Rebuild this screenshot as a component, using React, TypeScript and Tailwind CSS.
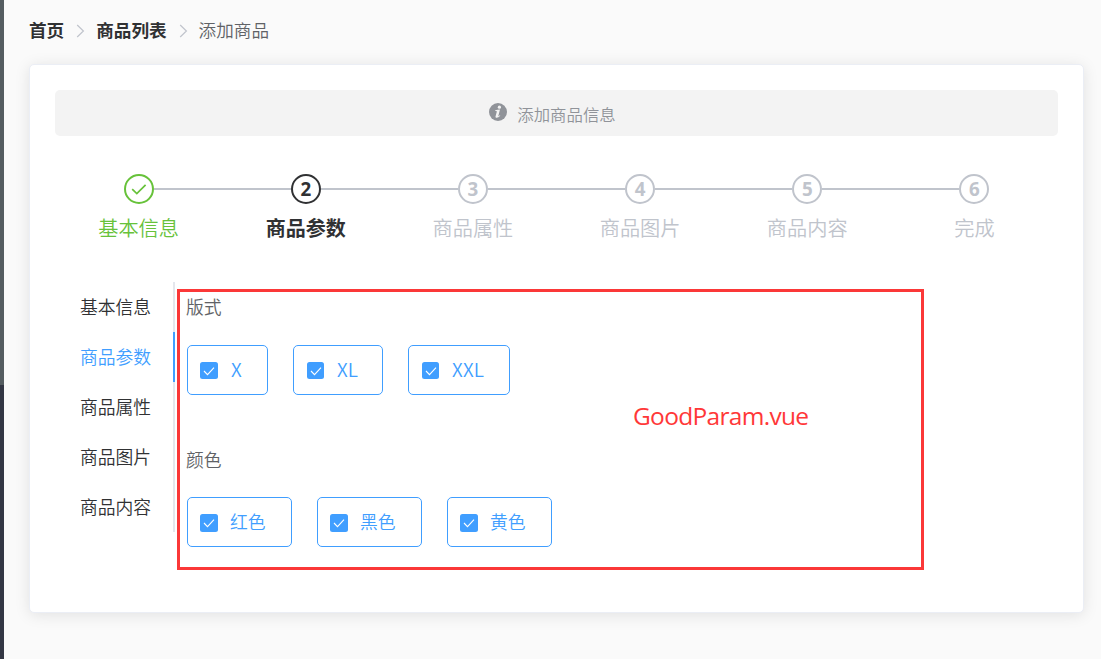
import React from "react";

const steps = ["基本信息", "商品参数", "商品属性", "商品图片", "商品内容", "完成"];
const tabs = ["基本信息", "商品参数", "商品属性", "商品图片", "商品内容"];

const params = [
  {
    name: "版式",
    nameClass: "h-[50px] leading-[48px]",
    options: [
      { label: "X", width: "w-[81px]", text: "ml-[13px] -mt-[3px] text-[19px]", box: "mt-[1px] h-[17px] w-[18px]" },
      { label: "XL", width: "w-[90px]", text: "ml-[13px] -mt-[3px] text-[19px]", box: "ml-[1px] mt-[1px] h-[17px] w-[17px]" },
      { label: "XXL", width: "w-[102px]", text: "ml-[13px] -mt-[3px] text-[19px] tracking-[0.2px]", box: "ml-[1px] mt-[1px] h-[17px] w-[17px]" },
    ],
  },
  {
    name: "颜色",
    nameClass: "h-[50px] leading-[50px]",
    options: [
      { label: "红色", width: "w-[105px]", text: "ml-[12px] -mt-[2px] text-[17.8px]", box: "mt-[2px] h-[18px] w-[18px]" },
      { label: "黑色", width: "w-[105px]", text: "ml-[12px] -mt-[2px] text-[17.8px]", box: "mt-[2px] h-[18px] w-[18px]" },
      { label: "黄色", width: "w-[105px]", text: "ml-[12px] -mt-[2px] text-[17.8px]", box: "mt-[2px] h-[18px] w-[18px]" },
    ],
  },
];

function Separator() {
  return (
    <svg className="mt-[1px] mr-[11px] ml-[12px] h-[14px] w-[9px]" viewBox="0 0 9 14" fill="none" stroke="#c0c4cc" strokeWidth="1.2">
      <path d="M1.2 1 7.4 7 1.2 13" />
    </svg>
  );
}

function Breadcrumb() {
  return (
    <nav className="flex h-[18px] items-center text-[17.6px] leading-[18px] text-[#606266]">
      <span className="font-bold text-[#303133]">首页</span>
      <Separator />
      <span className="font-bold text-[#303133]">商品列表</span>
      <Separator />
      <span className="font-[350]">添加商品</span>
    </nav>
  );
}

function InfoBanner() {
  return (
    <div className="flex h-[46px] items-center justify-center rounded-[5px] bg-[#f3f3f3] pr-[8px] text-[#909399]">
      <svg className="mr-[10px] mb-[2px] h-[18px] w-[18px]" viewBox="0 0 18 18">
        <circle cx="9" cy="9" r="9" fill="#909399" />
        <circle cx="10.4" cy="4.2" r="1.6" fill="#f3f3f3" />
        <path d="M6.2 7.3C7.8 6.8 9.4 6.6 11 6.6L9.3 12.9C9.2 13.7 9.8 13.3 10.8 12.2L11.3 12.6C9.4 15.1 6.2 15.6 6.5 13.5L7.8 8.8C7.9 8.1 7.3 8 6.2 8.1Z" fill="#f3f3f3" />
      </svg>
      <span className="pt-[1px] text-[16.4px] leading-5 font-[350]">添加商品信息</span>
    </div>
  );
}

function Steps() {
  return (
    <div className="mt-[38px] grid grid-cols-6">
      {steps.map((title, i) => {
        const tone =
          i === 0
            ? "border-[#67c23a] text-[#67c23a]"
            : i === 1
              ? "border-[#303133] text-[#303133]"
              : "border-[#c0c4cc] text-[#c0c4cc]";
        return (
          <div key={i} className={tone}>
            <div className="flex items-center">
              <div className={i === 0 ? "h-[2px] flex-1" : "h-[2px] flex-1 bg-[#c0c4cc]"} />
              <div className="flex h-[30px] w-[30px] items-center justify-center rounded-full border-2 border-inherit font-['Open_Sans','Noto_Sans',sans-serif] text-[18.75px] leading-none font-bold">
                {i === 0 ? (
                  <svg className="h-[16px] w-[18px]" viewBox="0 0 18 16" fill="none" stroke="currentColor" strokeWidth="1.7">
                    <path d="M2.2 8.2 6.8 12.6 15.6 3.8" />
                  </svg>
                ) : (
                  i + 1
                )}
              </div>
              <div className={i === steps.length - 1 ? "h-[2px] flex-1" : "h-[2px] flex-1 bg-[#c0c4cc]"} />
            </div>
            <div className={i === 1 ? "text-center text-[20px] leading-[48px] font-bold" : "text-center text-[20.2px] leading-[48px] font-[350]"}>
              {title}
            </div>
          </div>
        );
      })}
    </div>
  );
}

function SideTabs() {
  return (
    <div className="flex h-[250px] w-[120px] flex-col">
      {tabs.map((tab, i) => (
        <div
          key={i}
          className={
            i === 1
              ? "h-[50px] border-r-2 border-[#409eff] pl-[25px] text-[17.8px] leading-[49px] font-[350] text-[#409eff]"
              : "h-[50px] border-r-2 border-[#e4e7ed] pl-[25px] text-[17.8px] leading-[49px] font-[350] text-[#303133]"
          }
        >
          {tab}
        </div>
      ))}
    </div>
  );
}

type OptionProps = { label: string; width: string; text: string; box: string };

function Option({ label, width, text, box }: OptionProps) {
  return (
    <label className={`flex h-[50px] items-center rounded-[5px] border border-[#409eff] pl-[12px] text-[#409eff] ${width}`}>
      <span className={`flex items-center justify-center rounded-[2.5px] bg-[#409eff] ${box}`}>
        <svg className="h-[12px] w-[12px]" viewBox="0 0 12 12" fill="none" stroke="white" strokeWidth="1.1">
          <path d="M1 6 4.5 9.7 11 2.7" />
        </svg>
      </span>
      <span className={`leading-[48px] font-[350] ${text}`}>{label}</span>
    </label>
  );
}

export default function App() {
  return (
    <div className="relative flex h-[659px] w-[1101px] overflow-hidden bg-[#fafafa] font-['Noto_Sans_CJK_SC',sans-serif]">
      <div className="flex w-1 flex-col">
        <div className="h-[385px] bg-[#555d61]" />
        <div className="flex-1 bg-[#333744]" />
      </div>
      <main className="flex-1 pt-[21px] pr-[17px] pl-[25px]">
        <Breadcrumb />
        <section className="mt-[25px] h-[549px] rounded-[5px] border border-[#ebeef5] bg-white p-[25px] shadow-[0_2px_15px_rgba(0,0,0,0.1)]">
          <InfoBanner />
          <Steps />
          <div className="mt-[30px] flex">
            <SideTabs />
            <div className="ml-[12px]">
              {params.map((param) => (
                <div key={param.name} className="h-[152px]">
                  <div className={`-ml-[1px] text-[17.8px] font-[350] text-[#606266] ${param.nameClass}`}>{param.name}</div>
                  <div className="mt-[13px] flex gap-[25px]">
                    {param.options.map((option) => (
                      <Option key={option.label} {...option} />
                    ))}
                  </div>
                </div>
              ))}
            </div>
          </div>
        </section>
      </main>
      <div className="absolute top-[289px] left-[177px] h-[281px] w-[747px] border-3 border-[#fb3838]">
        <span className="absolute top-[108px] left-[453px] font-['Open_Sans','Noto_Sans',sans-serif] text-[24.5px] leading-8 tracking-[-0.7px] text-[#ff3838]">
          GoodParam.vue
        </span>
      </div>
    </div>
  );
}
